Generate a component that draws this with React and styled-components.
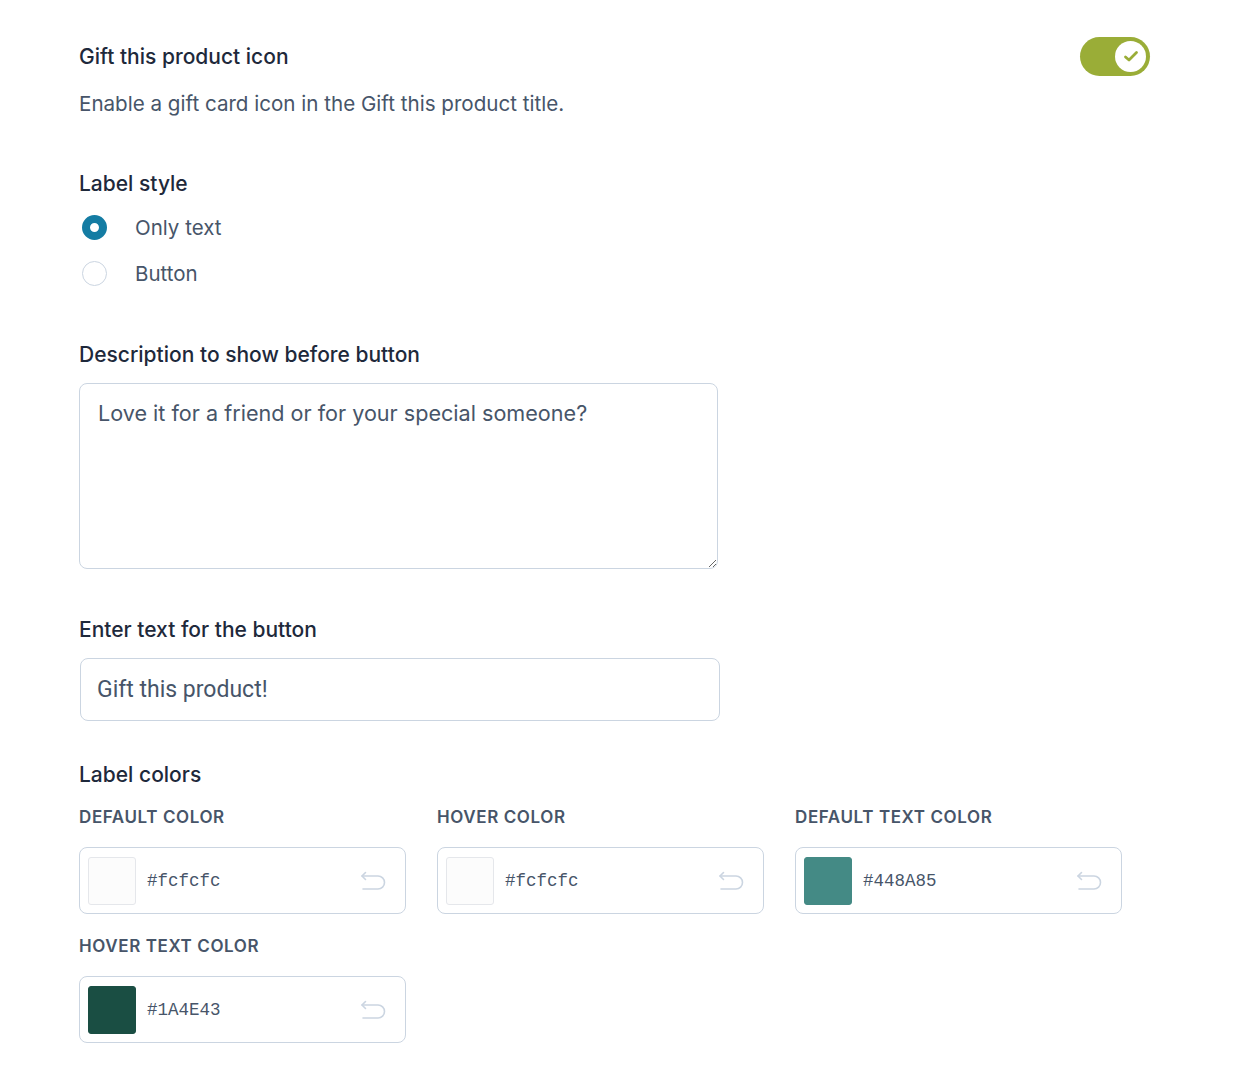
import React, { useState } from "react";
import styled, { createGlobalStyle } from "styled-components";

const GlobalStyle = createGlobalStyle`
  body {
    margin: 0;
    background: #ffffff;
    font-family: Inter, "Noto Sans", sans-serif;
    color: #1e293b;
  }
`;

const Page = styled.div`
  width: 1071px;
  padding: 37px 0 40px 79px;
`;

const Header = styled.div`
  display: flex;
  justify-content: space-between;
  align-items: flex-start;
`;

const Title = styled.div`
  font-size: 21px;
  font-weight: 500;
  line-height: 28px;
  color: #1e293b;
  margin-top: ${(p) => p.$top || 0}px;
`;

const Description = styled.div`
  margin-top: 19px;
  font-size: 20.6px;
  line-height: 28px;
  color: #475569;
`;

const Toggle = styled.button`
  width: 70px;
  height: 39px;
  border: none;
  border-radius: 20px;
  background: #9aad37;
  padding: 0 4px;
  display: flex;
  align-items: center;
  justify-content: ${(p) => (p.$on ? "flex-end" : "flex-start")};
  cursor: pointer;
`;

const Knob = styled.span`
  width: 31px;
  height: 31px;
  border-radius: 50%;
  background: #ffffff;
  display: flex;
  align-items: center;
  justify-content: center;
`;

const RadioList = styled.div`
  margin-top: 12px;
  display: flex;
  flex-direction: column;
  gap: 12px;
`;

const RadioRow = styled.label`
  height: 34px;
  display: flex;
  align-items: center;
  gap: 28px;
  padding-left: 3px;
  font-size: 20.5px;
  color: #475569;
  cursor: pointer;
`;

const RadioDot = styled.span`
  width: 25px;
  height: 25px;
  border-radius: 50%;
  box-sizing: border-box;
  border: ${(p) => (p.$checked ? "8.5px solid #147ca3" : "1px solid #cbd5e1")};
  background: #ffffff;
`;

const TextArea = styled.textarea`
  display: block;
  margin-top: 14px;
  width: 639px;
  height: 186px;
  box-sizing: border-box;
  border: 1px solid #cbd5e1;
  border-radius: 8px;
  padding: 15px 18px;
  font-family: Inter, "Noto Sans", sans-serif;
  font-size: 21.6px;
  line-height: 28px;
  color: #475569;
  resize: vertical;
  outline: none;
`;

const TextInput = styled.input`
  display: block;
  margin-top: 14px;
  margin-left: 1px;
  width: 640px;
  height: 63px;
  box-sizing: border-box;
  border: 1px solid #cbd5e1;
  border-radius: 8px;
  padding: 0 16px;
  font-family: Roboto, "Noto Sans", sans-serif;
  font-size: 23px;
  color: #475569;
  outline: none;
`;

const ColorGrid = styled.div`
  margin-top: 17px;
  display: grid;
  grid-template-columns: repeat(3, 327px);
  column-gap: 31px;
  row-gap: 21px;
`;

const ColorField = styled.div`
  display: flex;
  flex-direction: column;
  gap: 19px;
`;

const SubLabel = styled.div`
  font-size: 17px;
  font-weight: 600;
  line-height: 22px;
  letter-spacing: 0.6px;
  color: #475569;
  text-transform: uppercase;
`;

const ColorBox = styled.div`
  height: 67px;
  box-sizing: border-box;
  border: 1px solid #cbd5e1;
  border-radius: 8px;
  padding: 0 18px 0 8px;
  display: flex;
  align-items: center;
  gap: 11px;
`;

const Swatch = styled.span`
  width: 48px;
  height: 48px;
  box-sizing: border-box;
  border-radius: 3px;
  background: ${(p) => p.$color};
  border: 1px solid ${(p) => (p.$light ? "#e5e7eb" : p.$color)};
`;

const HexText = styled.span`
  flex: 1;
  font-family: "Liberation Mono", "DejaVu Sans Mono", monospace;
  font-size: 17.5px;
  color: #475569;
`;

const ResetIcon = () => (
  <svg width="28" height="22" viewBox="0 0 28 22" fill="none" stroke="#cbd5e1" strokeWidth="1.6" strokeLinecap="round" strokeLinejoin="round">
    <path d="M3 6 H19 a6.5 6.5 0 0 1 0 13 H4" />
    <path d="M6.5 2.5 L3 6 L6.5 9.5" />
  </svg>
);

const CheckIcon = () => (
  <svg width="16" height="13" viewBox="0 0 16 13" fill="none" stroke="#9aad37" strokeWidth="2.8" strokeLinecap="round" strokeLinejoin="round">
    <path d="M2.5 7 L6 10 L13.5 2.5" />
  </svg>
);

const colors = [
  { label: "Default color", value: "#fcfcfc", light: true },
  { label: "Hover color", value: "#fcfcfc", light: true },
  { label: "Default text color", value: "#448A85" },
  { label: "Hover text color", value: "#1A4E43" },
];

export default function App() {
  const [on, setOn] = useState(true);
  const [style, setStyle] = useState("text");

  return (
    <Page>
      <GlobalStyle />
      <Header>
        <div>
          <Title $top={6}>Gift this product icon</Title>
          <Description>Enable a gift card icon in the Gift this product title.</Description>
        </div>
        <Toggle $on={on} onClick={() => setOn(!on)}>
          <Knob>{on && <CheckIcon />}</Knob>
        </Toggle>
      </Header>

      <Title $top={52}>Label style</Title>
      <RadioList>
        <RadioRow onClick={() => setStyle("text")}>
          <RadioDot $checked={style === "text"} />
          Only text
        </RadioRow>
        <RadioRow onClick={() => setStyle("button")}>
          <RadioDot $checked={style === "button"} />
          Button
        </RadioRow>
      </RadioList>

      <Title $top={51}>Description to show before button</Title>
      <TextArea defaultValue="Love it for a friend or for your special someone?" />

      <Title $top={47}>Enter text for the button</Title>
      <TextInput defaultValue="Gift this product!" />

      <Title $top={40}>Label colors</Title>
      <ColorGrid>
        {colors.map((c) => (
          <ColorField key={c.label}>
            <SubLabel>{c.label}</SubLabel>
            <ColorBox>
              <Swatch $color={c.value} $light={c.light} />
              <HexText>{c.value}</HexText>
              <ResetIcon />
            </ColorBox>
          </ColorField>
        ))}
      </ColorGrid>
    </Page>
  );
}
